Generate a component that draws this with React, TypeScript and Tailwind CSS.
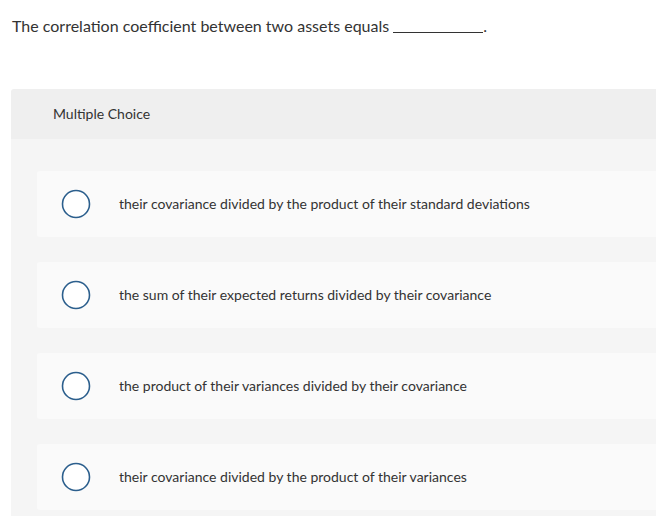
import React from 'react';

const options = [
  'their covariance divided by the product of their standard deviations',
  'the sum of their expected returns divided by their covariance',
  'the product of their variances divided by their covariance',
  'their covariance divided by the product of their variances',
];

const Radio: React.FC = () => (
  <svg width="30" height="30" viewBox="0 0 30 30" className="shrink-0">
    <circle cx="15" cy="15" r="13.5" fill="#ffffff" stroke="#2c5f8d" strokeWidth="1.6" />
  </svg>
);

export default function App() {
  return (
    <div className="w-[656px] h-[516px] overflow-hidden bg-white text-[#333]" style={{ fontFamily: 'Lato, "Open Sans", sans-serif' }}>
      <div className="pt-[16px] pl-[12px] h-[89px]">
        <p className="text-[16px] leading-[20px] flex items-baseline">
          The correlation coefficient between two assets equals
          <span className="inline-block w-[90px] border-b border-[#333] ml-[4px] translate-y-[1px]" />
          <span>.</span>
        </p>
      </div>

      <div className="ml-[11px] rounded-tl-[3px] overflow-hidden">
        <div className="h-[50px] bg-[#efefef] flex items-center pl-[42px] pb-[1px] text-[14px]">Multiple Choice</div>
        <div className="bg-[#f5f5f5] pt-[32px] pl-[26px] flex flex-col gap-[25px] pb-[20px]">
          {options.map((text, i) => (
            <div key={i} className="h-[66px] bg-[#fafafa] flex items-center pl-[24px] rounded-l-[3px]">
              <Radio />
              <span className="ml-[28px] mb-[1px] text-[14px]">{text}</span>
            </div>
          ))}
        </div>
      </div>
    </div>
  );
}
